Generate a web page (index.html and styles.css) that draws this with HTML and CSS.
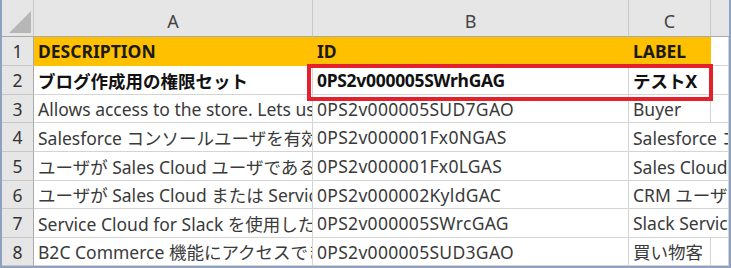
FILE: index.html
```html
<!DOCTYPE html>
<html lang="ja">
<head>
<meta charset="utf-8">
<link rel="stylesheet" href="styles.css">
</head>
<body>
<div class="frame">
  <div class="sheet">
    <div class="corner"><svg class="tri" width="22" height="22" viewBox="0 0 22 22"><polygon points="22,0 22,22 0,22" fill="#b7b7b7"/></svg></div>
    <div class="colhead">A</div>
    <div class="colhead">B</div>
    <div class="colhead">C</div>
    <div class="colhead blank"></div>

    <div class="rowhead">1</div>
    <div class="cell hdr">DESCRIPTION</div>
    <div class="cell hdr">ID</div>
    <div class="cell hdr">LABEL</div>
    <div class="cell"></div>

    <div class="rowhead">2</div>
    <div class="cell bold">ブログ作成用の権限セット</div>
    <div class="cell bold id-bold">0PS2v000005SWrhGAG</div>
    <div class="cell bold">テストX</div>
    <div class="cell"></div>

    <div class="rowhead">3</div>
    <div class="cell">Allows access to the store. Lets users buy things</div>
    <div class="cell id">0PS2v000005SUD7GAO</div>
    <div class="cell">Buyer</div>
    <div class="cell"></div>

    <div class="rowhead">4</div>
    <div class="cell">Salesforce コンソールユーザを有効にする</div>
    <div class="cell id">0PS2v000001Fx0NGAS</div>
    <div class="cell span2">Salesforce コンソールユーザ</div>

    <div class="rowhead">5</div>
    <div class="cell">ユーザが Sales Cloud ユーザであることを示す</div>
    <div class="cell id">0PS2v000001Fx0LGAS</div>
    <div class="cell span2">Sales Cloud ユーザ</div>

    <div class="rowhead">6</div>
    <div class="cell">ユーザが Sales Cloud または Service Cloud</div>
    <div class="cell id">0PS2v000002KyldGAC</div>
    <div class="cell span2">CRM ユーザ</div>

    <div class="rowhead">7</div>
    <div class="cell">Service Cloud for Slack を使用したい</div>
    <div class="cell id">0PS2v000005SWrcGAG</div>
    <div class="cell span2">Slack Service User</div>

    <div class="rowhead">8</div>
    <div class="cell">B2C Commerce 機能にアクセスできる</div>
    <div class="cell id">0PS2v000005SUD3GAO</div>
    <div class="cell">買い物客</div>
    <div class="cell"></div>

    <div class="highlight"></div>
  </div>
</div>
</body>
</html>
```

FILE: styles.css
```css
* { box-sizing: border-box; }
html, body { margin: 0; padding: 0; background: #ffffff; }
.frame {
  width: 731px;
  height: 268px;
  overflow: hidden;
  border-left: 2px solid #8ea2bf;
  border-right: 2px solid #8ea2bf;
  border-bottom: 2px solid #8ea2bf;
}
.sheet {
  position: relative;
  display: grid;
  grid-template-columns: 32px 279px 316px 82px 1fr;
  grid-template-rows: 37px 29px 29px 28px 29px 29px 28px 29px 28px;
  font-family: "Noto Sans", "Noto Sans CJK JP", sans-serif;
  font-size: 17.5px;
  color: #3a3a3a;
}
.corner {
  background: #e6e6e6;
  border-right: 1px solid #c8c8c8;
  border-bottom: 1px solid #a9a9a9;
  display: flex;
  align-items: flex-end;
  justify-content: flex-end;
  padding: 0 2px 3px 0;
}
.colhead {
  background: #e6e6e6;
  border-right: 1px solid #c8c8c8;
  border-bottom: 1px solid #a9a9a9;
  display: flex;
  align-items: center;
  justify-content: center;
  padding-top: 6px;
  font-size: 18px;
  color: #444444;
}
.colhead.blank { border-right: none; }
.rowhead {
  background: #e6e6e6;
  border-right: 1px solid #a9a9a9;
  border-bottom: 1px solid #c8c8c8;
  display: flex;
  align-items: center;
  justify-content: center;
  font-size: 17.5px;
  color: #333333;
}
.cell {
  border-right: 1px solid #d4d4d4;
  border-bottom: 1px solid #d4d4d4;
  display: flex;
  align-items: center;
  padding-left: 4px;
  white-space: nowrap;
  overflow: hidden;
  min-width: 0;
}
.id { letter-spacing: 0.3px; }
.id-bold { letter-spacing: -0.3px; }
.span2 { grid-column: span 2; }
.hdr {
  background: #ffc000;
  font-weight: bold;
  color: #1a1a1a;
  border-right-color: #ffc000;
  border-bottom-color: #ffc000;
}
.bold { font-weight: bold; color: #111111; }
.highlight {
  position: absolute;
  left: 305px;
  top: 64px;
  width: 406px;
  height: 37px;
  border: 4px solid #e3202b;
}
```
